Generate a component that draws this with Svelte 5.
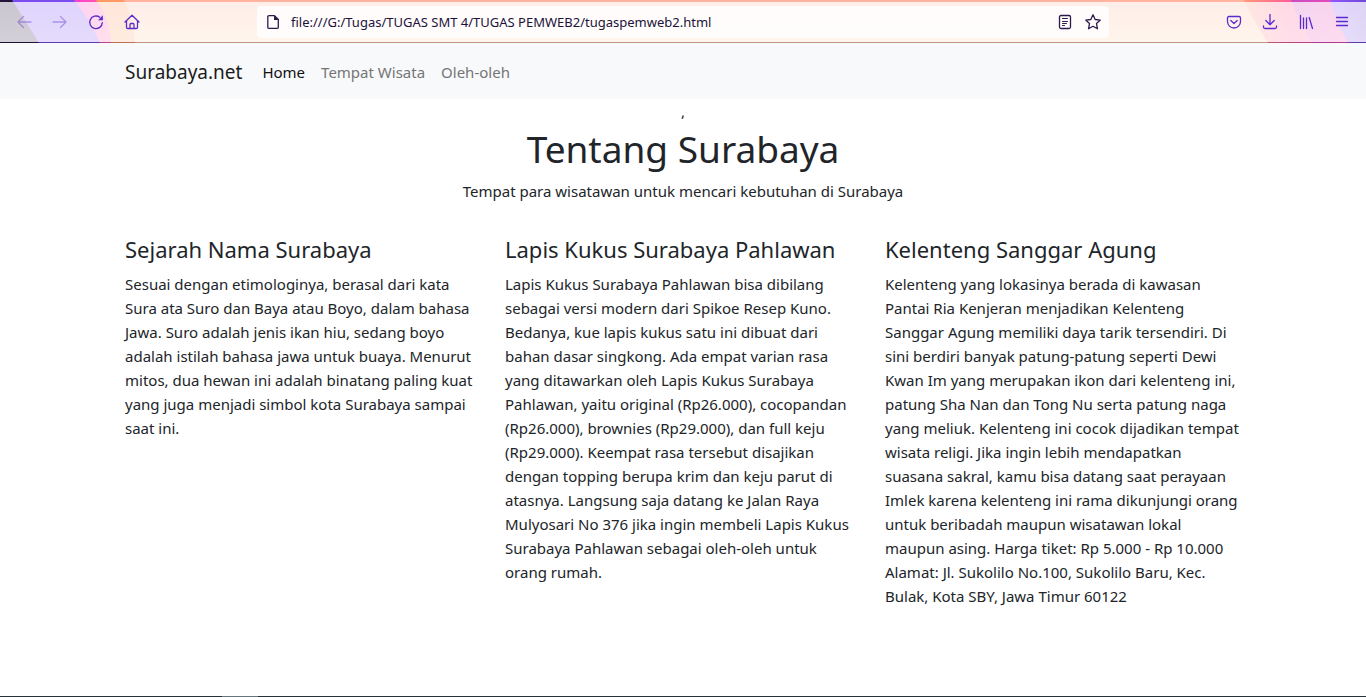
<script>
  let address = $state('file:///G:/Tugas/TUGAS SMT 4/TUGAS PEMWEB2/tugaspemweb2.html');

  const links = [
    { label: 'Home', active: true },
    { label: 'Tempat Wisata', active: false },
    { label: 'Oleh-oleh', active: false }
  ];

  const articles = [
    {
      title: 'Sejarah Nama Surabaya',
      body: `Sesuai dengan etimologinya, berasal dari kata
Sura ata Suro dan Baya atau Boyo, dalam bahasa
Jawa. Suro adalah jenis ikan hiu, sedang boyo
adalah istilah bahasa jawa untuk buaya. Menurut
mitos, dua hewan ini adalah binatang paling kuat
yang juga menjadi simbol kota Surabaya sampai
saat ini.`
    },
    {
      title: 'Lapis Kukus Surabaya Pahlawan',
      body: `Lapis Kukus Surabaya Pahlawan bisa dibilang
sebagai versi modern dari Spikoe Resep Kuno.
Bedanya, kue lapis kukus satu ini dibuat dari
bahan dasar singkong. Ada empat varian rasa
yang ditawarkan oleh Lapis Kukus Surabaya
Pahlawan, yaitu original (Rp26.000), cocopandan
(Rp26.000), brownies (Rp29.000), dan full keju
(Rp29.000). Keempat rasa tersebut disajikan
dengan topping berupa krim dan keju parut di
atasnya. Langsung saja datang ke Jalan Raya
Mulyosari No 376 jika ingin membeli Lapis Kukus
Surabaya Pahlawan sebagai oleh-oleh untuk
orang rumah.`
    },
    {
      title: 'Kelenteng Sanggar Agung',
      body: `Kelenteng yang lokasinya berada di kawasan
Pantai Ria Kenjeran menjadikan Kelenteng
Sanggar Agung memiliki daya tarik tersendiri. Di
sini berdiri banyak patung-patung seperti Dewi
Kwan Im yang merupakan ikon dari kelenteng ini,
patung Sha Nan dan Tong Nu serta patung naga
yang meliuk. Kelenteng ini cocok dijadikan tempat
wisata religi. Jika ingin lebih mendapatkan
suasana sakral, kamu bisa datang saat perayaan
Imlek karena kelenteng ini rama dikunjungi orang
untuk beribadah maupun wisatawan lokal
maupun asing. Harga tiket: Rp 5.000 - Rp 10.000
Alamat: Jl. Sukolilo No.100, Sukolilo Baru, Kec.
Bulak, Kota SBY, Jawa Timur 60122`
    }
  ];
</script>

<div class="window">
  <header class="toolbar">
    <svg class="art left" width="140" height="43" viewBox="0 0 140 43" aria-hidden="true">
      <defs>
        <linearGradient id="blush" gradientUnits="userSpaceOnUse" x1="74" y1="0" x2="111" y2="0"><stop offset="0" stop-color="#ff3fd0" /><stop offset="1" stop-color="#ff62a0" /></linearGradient>
      </defs>
      <path d="M0 0H124Q134 20 135 43H0Z" fill="#ff9a62" />
      <path d="M0 0H96Q110 18 111 43H0Z" fill="url(#blush)" />
      <path d="M0 0H74Q90 20 100 43H0Z" fill="#7a4cf0" />
      <path d="M0 0H12Q24 19 39 43H0Z" fill="#20123a" />
    </svg>
    <svg class="art right" width="160" height="43" viewBox="-20 0 160 43" aria-hidden="true">
      <defs>
        <linearGradient id="pink" gradientUnits="userSpaceOnUse" x1="18" y1="0" x2="92" y2="0"><stop offset="0" stop-color="#ff9a78" /><stop offset="0.6" stop-color="#ff5f94" /><stop offset="1" stop-color="#ff55a8" /></linearGradient>
        <linearGradient id="magenta" gradientUnits="userSpaceOnUse" x1="65" y1="0" x2="122" y2="20"><stop offset="0" stop-color="#c84cc4" /><stop offset="1" stop-color="#f64cb0" /></linearGradient>
        <linearGradient id="violet"><stop offset="0" stop-color="#9059ff" /><stop offset="1" stop-color="#7048d4" /></linearGradient>
      </defs>
      <path d="M18 0H140V43H42Q29 24 18 0Z" fill="url(#pink)" />
      <path d="M65 0H140V43H87Q72 20 65 0Z" fill="url(#magenta)" />
      <path d="M104 0H140V43H122Q111 23 104 0Z" fill="url(#violet)" />
    </svg>

    <div class="bar">
      <div class="group nav-buttons">
        <button class="faded" aria-label="Back"><svg viewBox="0 0 16 16"><path d="M15 8H2M7.500 2.500L2 8l5.500 5.500" /></svg></button>
        <button class="faded" aria-label="Forward"><svg viewBox="0 0 16 16"><path d="M1 8h13M8.500 2.500L14 8l-5.500 5.500" /></svg></button>
        <button aria-label="Reload"><svg viewBox="0 0 16 16"><path d="M11.800 3.300A6.300 6.300 0 1 0 14.300 8.600" /><path class="fill" d="M14.900 1.300V6.200H10Z" /></svg></button>
        <button aria-label="Home page"><svg viewBox="0 0 16 16"><path d="M1 8l7-6.700L15 8M2.500 7v6.200q0 1.300 1.300 1.300h8.400q1.300 0 1.300-1.300V7M6 14.500v-4q0-1 1-1h2q1 0 1 1v4" /></svg></button>
      </div>

      <div class="address">
        <svg viewBox="0 0 16 16" aria-hidden="true"><path d="M4 1.700h5.500L13.300 5.500v7.700q0 1.200-1.200 1.200H4q-1.200 0-1.200-1.200V3Q2.800 1.700 4 1.700Z" /><path class="fill" d="M9 1.500V6h4.500Z" /></svg>
        <input type="text" aria-label="Address" bind:value={address} spellcheck="false" />
        <button aria-label="Reader view"><svg viewBox="0 0 16 16"><rect x="2.500" y="1.500" width="11" height="13" rx="1.500" /><path d="M5.500 4.500h5M5.500 7.500h5M5.500 9.500h4M5.500 11.500h2" stroke-width="1" /></svg></button>
        <button aria-label="Bookmark"><svg viewBox="0 0 16 16"><path d="M8 .8l2.200 4.700 5.100.6-3.800 3.500 1 5.200L8 12.300l-4.500 2.500 1-5.200L.7 6.100l5.100-.6Z" /></svg></button>
      </div>

      <div class="group menu-buttons">
        <button aria-label="Save to Pocket"><svg viewBox="0 0 16 16"><path d="M3 2.500h10q1.500 0 1.500 1.500v3.500a6.500 6.500 0 0 1-13 0V4Q1.500 2.500 3 2.500Z" /><path d="M4.800 6.500L8 9.500l3.200-3" /></svg></button>
        <button aria-label="Downloads"><svg viewBox="0 0 16 16"><path d="M8 .5v10M3.800 6.500L8 10.700l4.200-4.200M1.500 12v1q0 1.500 1.500 1.500h10q1.500 0 1.500-1.500v-1" /></svg></button>
        <button aria-label="Library"><svg viewBox="0 0 16 16"><path d="M2.500 1.500v13M5.500 4v10.500M8.500 4v10.500M11.200 3.500L14.500 14.500" /></svg></button>
        <button aria-label="Menu"><svg viewBox="0 0 16 16"><path d="M2.500 3.500h11M2.500 7.500h11M2.500 11.500h11" /></svg></button>
      </div>
    </div>
  </header>

  <nav class="site-nav">
    <div class="container nav-row">
      <a class="brand" href="#home">Surabaya.net</a>
      {#each links as link}
        <a class="link" class:active={link.active} href="#home">{link.label}</a>
      {/each}
    </div>
  </nav>

  <main class="container">
    <div class="intro">
      <p>,</p>
      <h1>Tentang Surabaya</h1>
      <p>Tempat para wisatawan untuk mencari kebutuhan di Surabaya</p>
    </div>
    <div class="columns">
      {#each articles as article}
        <article>
          <h2>{article.title}</h2>
          <p>{article.body}</p>
        </article>
      {/each}
    </div>
  </main>

  <div class="edge"><span></span></div>
</div>

<style>
  :global(body) {
    margin: 0;
    background: #fff;
    color: #212529;
    font-family: 'Noto Sans', 'Open Sans', sans-serif;
    font-size: 15px;
    line-height: 24px;
  }
  .window {
    display: flex;
    flex-direction: column;
    min-height: 100vh;
  }
  .toolbar {
    position: relative;
    background: linear-gradient(#ffb3a0, #ffcea0);
    padding: 2px 0 1px;
  }
  .toolbar::after {
    content: '';
    position: absolute;
    inset: auto 0 0;
    height: 1px;
    background: rgba(32, 18, 58, 0.3);
  }
  .art {
    position: absolute;
    top: 0;
  }
  .left { left: 0; }
  .right { right: 0; }
  .bar {
    position: relative;
    display: flex;
    align-items: center;
    height: 40px;
    background: linear-gradient(rgba(255, 255, 255, 0.76), rgba(255, 255, 255, 0.8));
  }
  .group {
    display: flex;
    box-sizing: border-box;
    color: #5b2bcf;
  }
  .nav-buttons {
    width: 257px;
    padding-left: 6px;
  }
  .menu-buttons {
    margin-left: auto;
    padding-right: 6px;
  }
  button {
    display: grid;
    place-items: center;
    width: 36px;
    height: 32px;
    padding: 0;
    border: 0;
    background: none;
    color: inherit;
  }
  button.faded { opacity: 0.4; }
  .bar svg {
    width: 16px;
    height: 16px;
    flex: none;
    fill: none;
    stroke: currentColor;
    stroke-width: 1.3;
    stroke-linecap: round;
    stroke-linejoin: round;
  }
  .bar .fill {
    fill: currentColor;
    stroke: none;
  }
  .address {
    display: flex;
    flex: 1;
    align-items: center;
    max-width: 852px;
    height: 32px;
    box-sizing: border-box;
    padding: 0 2px 0 8px;
    border-radius: 4px;
    background: rgba(255, 255, 255, 0.8);
    color: #2b1b4d;
  }
  .address button { width: 28px; }
  input {
    flex: 1;
    min-width: 0;
    padding: 0 10px;
    border: 0;
    outline: 0;
    background: none;
    color: #20123a;
    font: 13px/24px 'Noto Sans', 'Open Sans', sans-serif;
  }
  .site-nav { background: #f8f9fa; }
  .container {
    box-sizing: border-box;
    width: 100%;
    max-width: 1140px;
    margin: 0 auto;
    padding: 0 12px;
  }
  .nav-row {
    display: flex;
    align-items: center;
    gap: 16px;
    height: 56px;
    padding-top: 2px;
  }
  a { text-decoration: none; }
  .brand {
    margin-right: 4px;
    color: #1a1d20;
    font-size: 19px;
  }
  .link { color: #747576; }
  .link.active { color: #101112; }
  main { flex: 1; }
  h1, h2, p {
    margin: 0;
    font-weight: 400;
  }
  .intro {
    padding-bottom: 32px;
    text-align: center;
  }
  h1 {
    margin-bottom: 4px;
    font-size: 37px;
    line-height: 52px;
  }
  .columns {
    display: grid;
    grid-template-columns: repeat(3, minmax(0, 1fr));
    gap: 24px;
  }
  h2 {
    margin-bottom: 8px;
    font-size: 22px;
    line-height: 29px;
  }
  article p { white-space: pre-line; }
  .edge {
    height: 1px;
    background: #263238;
  }
  .edge span {
    display: block;
    width: 36px;
    height: 1px;
    margin-left: 222px;
    background: #66757c;
  }
  @media (max-width: 800px) {
    .columns { grid-template-columns: 1fr; }
    .nav-buttons { width: auto; }
  }
</style>
